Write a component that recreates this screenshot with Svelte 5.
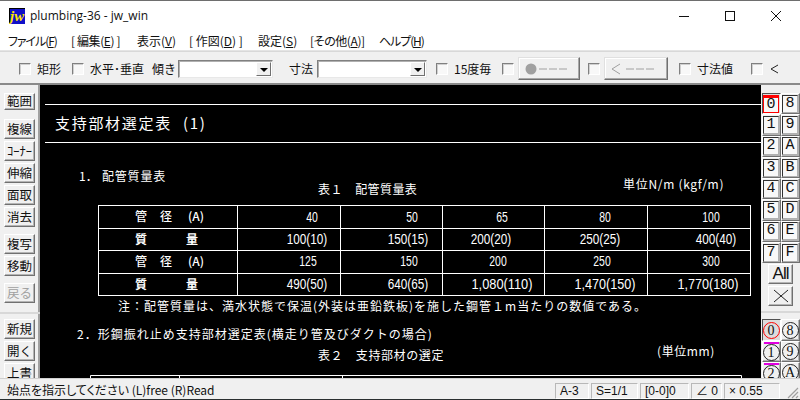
<script>
  const menus = [
    { pre: 'ファイル(', key: 'F', post: ')', w: 63, cls: 'tight' },
    { pre: '[ 編集(', key: 'E', post: ') ]', w: 66, cls: 'snug' },
    { pre: '表示(', key: 'V', post: ')', w: 52 },
    { pre: '[ 作図(', key: 'D', post: ') ]', w: 69 },
    { pre: '設定(', key: 'S', post: ')', w: 52 },
    { pre: '[その他(', key: 'A', post: ')]', w: 69, cls: 'snug' },
    { pre: 'ヘルプ(', key: 'H', post: ')', w: 60, cls: 'tight' }
  ];

  const leftTools = [
    { label: '範囲', cls: 'first' },
    { label: '複線', cls: 'gap' },
    { label: 'ｺｰﾅｰ' },
    { label: '伸縮' },
    { label: '面取' },
    { label: '消去' },
    { label: '複写', cls: 'gap2' },
    { label: '移動' },
    { label: '戻る', cls: 'off' }
  ];
  const fileTools = ['新規', '開く', '上書'];

  const layerRows = [['0', '8'], ['1', '9'], ['2', 'A'], ['3', 'B'], ['4', 'C'], ['5', 'D'], ['6', 'E'], ['7', 'F']];
  const groupRows = [['0', '8'], ['1', '9'], ['2', 'A']];

  // table 1 of the drawing, cell centres are as drawn in the CAD file, not centred in the cells
  const colLines = [98, 237, 340, 442, 544, 647, 750];
  const rowLines = [204, 227, 249, 272, 294];
  const valueRows = [
    { y: 221, cells: [[312, '40'], [412, '50'], [502, '65'], [605, '80'], [711, '100']] },
    { y: 243, cells: [[307, '100(10)'], [408, '150(15)'], [491, '200(20)'], [600, '250(25)'], [716, '400(40)']] },
    { y: 265, cells: [[308, '125'], [409, '150'], [498, '200'], [602, '250'], [711, '300']] },
    { y: 288, cells: [[307, '490(50)'], [408, '640(65)'], [502, '1,080(110)'], [605, '1,470(150)'], [708, '1,770(180)']] }
  ];
  const headRows = [
    { y: 220, kind: 'dia' },
    { y: 243, kind: 'mass' },
    { y: 265, kind: 'dia' },
    { y: 288, kind: 'mass' }
  ];

  const numWidth = (s) => s.length * (s.length > 7 ? 6.1 : 5.8);
</script>

<div class="window">
  <div class="edge"></div>

  <header class="titlebar">
    <svg class="logo" width="16" height="16" viewBox="0 0 16 16">
      <rect width="16" height="16" fill="#1010c8" />
      <path d="M0 .5H16M.5 0V16" stroke="#000" fill="none" />
      <text x="1" y="12.500" class="logo-text">jw</text>
    </svg>
    <span class="title">plumbing-36 - jw_win</span>
    <div class="controls">
      <svg width="46" height="30" viewBox="0 0 46 30"><path d="M18 15.500h10" stroke="#111" fill="none" /></svg>
      <svg width="46" height="30" viewBox="0 0 46 30"><rect x="18.500" y="10.500" width="9" height="9" stroke="#111" fill="none" /></svg>
      <svg width="46" height="30" viewBox="0 0 46 30"><path d="M18 10l10 10M28 10l-10 10" stroke="#111" fill="none" /></svg>
    </div>
  </header>

  <nav class="menubar">
    {#each menus as m}
      <span class="menu {m.cls ?? ''}" style="width: {m.w}px">{m.pre}<u>{m.key}</u>{m.post}</span>
    {/each}
  </nav>

  <div class="toolbar">
    <span class="check"></span><span class="lbl l1">矩形</span>
    <span class="check c2"></span><span class="lbl l2">水平･垂直</span>
    <span class="lbl l3">傾き</span>
    <span class="combo c-a"><i class="arrow"></i></span>
    <span class="lbl l4">寸法</span>
    <span class="combo c-b"><i class="arrow"></i></span>
    <span class="check c3"></span><span class="lbl l5">15度毎</span>
    <span class="check c4"></span>
    <span class="pill p1">
      <svg width="50" height="14" viewBox="0 0 50 14">
        <circle cx="6" cy="7" r="5.500" fill="#a0a0a0" />
        <path d="M14 7h8M24 7h8M34 7h8" stroke="#a0a0a0" />
      </svg>
    </span>
    <span class="check c5"></span>
    <span class="pill p2">
      <svg width="50" height="14" viewBox="0 0 50 14">
        <path d="M9 2L1 7l8 5" stroke="#a0a0a0" fill="none" />
        <path d="M15 7h8M25 7h8M35 7h8" stroke="#a0a0a0" />
      </svg>
    </span>
    <span class="check c6"></span><span class="lbl l6">寸法値</span>
    <span class="check c7"></span>
    <svg class="lt" width="10" height="10" viewBox="0 0 10 10"><path d="M8 1L1 5l7 4" stroke="#222" fill="none" /></svg>
  </div>

  <div class="workspace">
    <aside class="left">
      {#each leftTools as t}
        <button class="tool {t.cls ?? ''}">{t.label}</button>
      {/each}
      <div class="sep"></div>
      {#each fileTools as t}
        <button class="tool">{t}</button>
      {/each}
    </aside>

    <main class="canvas">
      <svg width="721" height="293" viewBox="40 84 721 293">
        <path class="line" d="M45 103.500H761M45 141.500H761" />
        <text class="big" x="55" y="128">支持部材選定表</text>
        <text class="big" x="183" y="128">(1)</text>

        <text class="dwg" x="79" y="180">1．</text>
        <text class="dwg sp8" x="102" y="180">配管質量表</text>
        <text class="dwg sp4" x="318" y="193">表１　配管質量表</text>
        <text class="dwg sp7" x="623" y="188">単位N/m (kgf/m)</text>

        {#each rowLines as y}
          <path class="line" d="M98 {y + 0.5}H751" />
        {/each}
        {#each colLines as x}
          <path class="line" d="M{x + 0.5} 204V295" />
        {/each}

        {#each headRows as r}
          {#if r.kind === 'dia'}
            <text class="dwg head" x="135" y={r.y}>管</text>
            <text class="dwg head" x="160" y={r.y}>径</text>
            <text class="dwg head" x="188" y={r.y}>(A)</text>
          {:else}
            <text class="dwg strong" x="135" y={r.y}>質</text>
            <text class="dwg strong" x="186" y={r.y}>量</text>
          {/if}
        {/each}

        {#each valueRows as r}
          {#each r.cells as c}
            <text class="num" x={c[0]} y={r.y} textLength={numWidth(c[1])} lengthAdjust="spacingAndGlyphs">{c[1]}</text>
          {/each}
        {/each}

        <text class="dwg sp1" x="118" y="310">注：配管質量は、満水状態で保温(外装は亜鉛鉄板)を施した鋼管１m当たりの数値である。</text>
        <text class="dwg sp1" x="77" y="338">2．形鋼振れ止め支持部材選定表(横走り管及びダクトの場合)</text>
        <text class="dwg sp6" x="318" y="359">表２　支持部材の選定</text>
        <text class="dwg sp6" x="657" y="355">(単位mm)</text>

        <path class="line" d="M90.500 377V374.500H741.500V377M179.500 374.500V377M342.500 374.500V377" />
      </svg>
    </main>

    <aside class="right">
      <div class="layers">
        {#each layerRows as row, i}
          <button class="layer" class:active={i === 0}><span class="num-box" class:cur={i === 0}>{row[0]}</span></button>
          <button class="layer"><span class="num-box">{row[1]}</span></button>
        {/each}
      </div>
      <button class="wide-btn all">All</button>
      <button class="wide-btn">
        <svg width="16" height="14" viewBox="0 0 16 14"><path d="M1 1l14 12M15 1L1 13" stroke="#222" fill="none" /></svg>
      </button>
      <div class="sep"></div>
      <div class="layers groups">
        {#each groupRows as row, i}
          <button class="layer" class:active={i === 0}>
            {#if i > 0}<i class="bar"></i>{/if}
            <span class="ring" class:red={i === 0} class:low={i > 0}>{row[0]}</span>
          </button>
          <button class="layer"><span class="ring">{row[1]}</span></button>
        {/each}
      </div>
    </aside>
  </div>

  <footer class="status">
    <span class="hint">始点を指示してください (L)free (R)Read</span>
    <span class="cell s1">A-3</span>
    <span class="cell s2">S=1/1</span>
    <span class="cell s3">[0-0]0</span>
    <span class="cell s4">∠ 0</span>
    <span class="cell s5">× 0.55</span>
    <svg class="grip" width="14" height="14" viewBox="0 0 14 14">
      <path d="M13 3L3 13M13 7L7 13M13 11L11 13" stroke="#a0a0a0" stroke-width="1.200" fill="none" />
    </svg>
  </footer>

  <div class="desktop"></div>
</div>

<style>
  :global(body) {
    margin: 0;
    background: #f0f0f0;
  }

  .window {
    width: 800px;
    height: 400px;
    display: flex;
    flex-direction: column;
    overflow: hidden;
    background: #f0f0f0;
    font-family: "Noto Sans CJK JP", "Liberation Sans", sans-serif;
    font-size: 12px;
    color: #111;
  }

  .edge {
    height: 1px;
    background: #6e6e6e;
    flex: none;
  }

  .titlebar {
    height: 29px;
    flex: none;
    display: flex;
    align-items: center;
    background: #fff;
    padding-left: 9px;
  }
  .logo { flex: none; }
  .logo-text {
    font-family: "Liberation Serif", serif;
    font-style: italic;
    font-weight: 700;
    font-size: 15px;
    fill: #ffe800;
  }
  .title {
    margin-left: 5px;
    font-family: "Open Sans", sans-serif;
    font-size: 12px;
  }
  .controls {
    margin-left: auto;
    display: flex;
    margin-right: 1px;
  }

  .menubar {
    height: 20px;
    flex: none;
    display: flex;
    align-items: center;
    background: #fff;
    padding-left: 8px;
    border-bottom: 1px solid #e4e4e4;
  }
  .menu {
    flex: none;
    white-space: nowrap;
    font-size: 12px;
    font-feature-settings: "palt";
  }
  .menu.tight { letter-spacing: -1.100px; }
  .menu.snug { letter-spacing: -0.400px; }

  .toolbar {
    height: 34px;
    flex: none;
    display: flex;
    align-items: center;
    box-sizing: border-box;
    padding: 2px 0 0 19px;
    border-top: 1px solid #d8d8d8;
    border-bottom: 2px solid #8a8a8a;
    background: #f0f0f0;
  }
  .check {
    width: 10px;
    height: 10px;
    flex: none;
    background: #f8f8f8;
    border: 1px solid;
    border-color: #808080 #fff #fff #808080;
    box-shadow: inset 1px 1px 0 #d0d0d0;
  }
  .lbl {
    flex: none;
    white-space: nowrap;
    font-size: 12px;
  }
  .l1 { margin-left: 6px; width: 24px; }
  .c2 { margin-left: 11px; }
  .l2 { margin-left: 6px; width: 52px; }
  .l3 { margin-left: 10px; width: 24px; }
  .combo {
    height: 18px;
    flex: none;
    box-sizing: border-box;
    display: flex;
    justify-content: flex-end;
    padding: 1px;
    background: #fff;
    border: 1px solid;
    border-color: #808080 #e8e8e8 #e8e8e8 #808080;
    box-shadow: inset 1px 1px 0 #b0b0b0;
  }
  .c-a { width: 95px; margin-left: 2px; }
  .l4 { margin-left: 16px; width: 24px; }
  .c-b { width: 110px; margin-left: 4px; }
  .arrow {
    width: 15px;
    display: block;
    box-sizing: border-box;
    background: #f0f0f0;
    border: 1px solid;
    border-color: #fff #707070 #707070 #fff;
    position: relative;
  }
  .arrow::after {
    content: '';
    position: absolute;
    left: 3px;
    top: 5px;
    border: 4px solid transparent;
    border-top: 4px solid #000;
    border-bottom: 0;
  }
  .c3 { margin-left: 9px; }
  .l5 { margin-left: 6px; width: 39px; }
  .c4 { margin-left: 9px; }
  .pill {
    height: 23px;
    flex: none;
    box-sizing: border-box;
    display: flex;
    align-items: center;
    padding-left: 6px;
    background: #f0f0f0;
    border: 1px solid;
    border-color: #e0e0e0 #707070 #707070 #e0e0e0;
    box-shadow: inset -1px -1px 0 #a8a8a8, inset 1px 1px 0 #fff;
  }
  .p1 { width: 62px; margin-left: 4px; }
  .c5 { margin-left: 8px; }
  .p2 { width: 64px; margin-left: 4px; }
  .c6 { margin-left: 11px; }
  .l6 { margin-left: 6px; width: 36px; }
  .c7 { margin-left: 18px; }
  .lt { margin-left: 7px; flex: none; }

  .workspace {
    height: 293px;
    flex: none;
    display: flex;
    overflow: hidden;
  }

  .left {
    width: 40px;
    flex: none;
    box-sizing: border-box;
    padding: 8px 2px 0 4px;
    border-right: 2px solid #a0a0a0;
    display: flex;
    flex-direction: column;
    gap: 2px;
  }
  button {
    margin: 0;
    padding: 0;
    font: inherit;
    color: inherit;
    background: #f0f0f0;
    border: 1px solid;
    border-color: #fff #707070 #707070 #fff;
    box-shadow: inset -1px -1px 0 #b4b4b4;
  }
  .tool {
    width: 31px;
    height: 20px;
    flex: none;
    font-size: 12.500px;
    line-height: 1;
    white-space: nowrap;
    overflow: hidden;
  }
  .tool.first { height: 17px; }
  .tool.gap { margin-top: 7px; }
  .tool.gap2 { margin-top: 5px; }
  .tool.off { margin-top: 5px; color: #a0a0a0; }
  .left .sep {
    height: 0;
    margin: 7px -4px 3px;
    border-top: 2px solid #d8d8d8;
    flex: none;
  }

  .canvas {
    flex: none;
    width: 721px;
    background: #000;
    overflow: hidden;
  }
  .canvas svg { display: block; }
  .line {
    stroke: #fff;
    stroke-width: 1;
    fill: none;
  }
  .big {
    fill: #fff;
    font-size: 15px;
    letter-spacing: 1.700px;
    font-family: "Noto Sans CJK JP", sans-serif;
  }
  .dwg {
    fill: #fff;
    font-size: 12px;
    font-family: "Noto Sans CJK JP", sans-serif;
  }
  .sp1 { letter-spacing: 1px; }
  .sp4 { letter-spacing: 0.400px; }
  .sp6 { letter-spacing: 0.600px; }
  .sp7 { letter-spacing: 0.700px; }
  .sp8 { letter-spacing: 0.800px; }
  .head { font-weight: 500; }
  .strong { font-weight: 700; }
  .num {
    fill: #fff;
    text-anchor: middle;
    font-family: "Liberation Sans", sans-serif;
    font-size: 14px;
  }

  .right {
    width: 39px;
    flex: none;
    padding-top: 8px;
    box-sizing: border-box;
    display: flex;
    flex-direction: column;
    align-items: center;
  }
  .layers {
    display: grid;
    grid-template-columns: 19px 19px;
    grid-auto-rows: 21.300px;
    width: 38px;
    flex: none;
  }
  .layer {
    position: relative;
    width: 19px;
    height: 21.300px;
    display: flex;
    align-items: center;
    justify-content: center;
    font-family: "Liberation Mono", monospace;
    font-size: 15px;
  }
  .layer.active {
    background: #dcdcdc;
    border-color: #505050 #fff #fff #505050;
    box-shadow: none;
  }
  .num-box {
    display: block;
    width: 14px;
    height: 16px;
    line-height: 16px;
    text-align: center;
    background: #f8f8f8;
    border: 1px solid #888;
    border-color: #303030 #b0b0b0 #b0b0b0 #303030;
  }
  .num-box.cur {
    border: 1px solid #f00;
    border-top-width: 3px;
    height: 14px;
    line-height: 14px;
  }
  .wide-btn {
    width: 25px;
    height: 20px;
    flex: none;
    margin-top: 2px;
    display: flex;
    align-items: center;
    justify-content: center;
  }
  .all {
    margin-top: 1px;
    font-family: "Liberation Sans", sans-serif;
    font-size: 17px;
    letter-spacing: -1px;
  }
  .right .sep {
    width: 100%;
    height: 0;
    flex: none;
    margin: 5px 0 6px;
    border-top: 2px solid #d8d8d8;
  }
  .ring {
    display: block;
    width: 15px;
    height: 15px;
    line-height: 15px;
    text-align: center;
    border: 1px solid #222;
    border-radius: 50%;
    font-family: "Liberation Serif", serif;
    font-size: 14px;
  }
  .ring.red { border-color: #f00; }
  .ring.low { margin-top: 2px; }
  .bar {
    position: absolute;
    left: 1px;
    right: 1px;
    top: 0;
    height: 2px;
    background: #e000e0;
  }

  .status {
    height: 21px;
    flex: none;
    display: flex;
    align-items: flex-end;
    box-sizing: border-box;
    background: #f0f0f0;
    border-top: 1px solid #d0d0d0;
    font-size: 12px;
  }
  .hint {
    flex: 1;
    align-self: center;
    padding-left: 7px;
    white-space: nowrap;
    font-feature-settings: "palt";
  }
  .cell {
    height: 16px;
    line-height: 15px;
    box-sizing: border-box;
    padding-left: 4px;
    margin-right: 2px;
    flex: none;
    white-space: nowrap;
    border-right: 1px solid #fff;
    border-bottom: 1px solid #fff;
    border-left: 1px solid #b8b8b8;
    border-top: 1px solid #b8b8b8;
    font-family: "Liberation Sans", "Noto Sans CJK JP", sans-serif;
    font-size: 12px;
  }
  .s1 { width: 34px; }
  .s2 { width: 47px; }
  .s3 { width: 49px; }
  .s4 { width: 31px; }
  .s5 { width: 56px; margin-right: 5px; }
  .grip { flex: none; margin-right: 1px; }

  .desktop {
    flex: 1;
    background: #2a2f30;
  }
</style>
